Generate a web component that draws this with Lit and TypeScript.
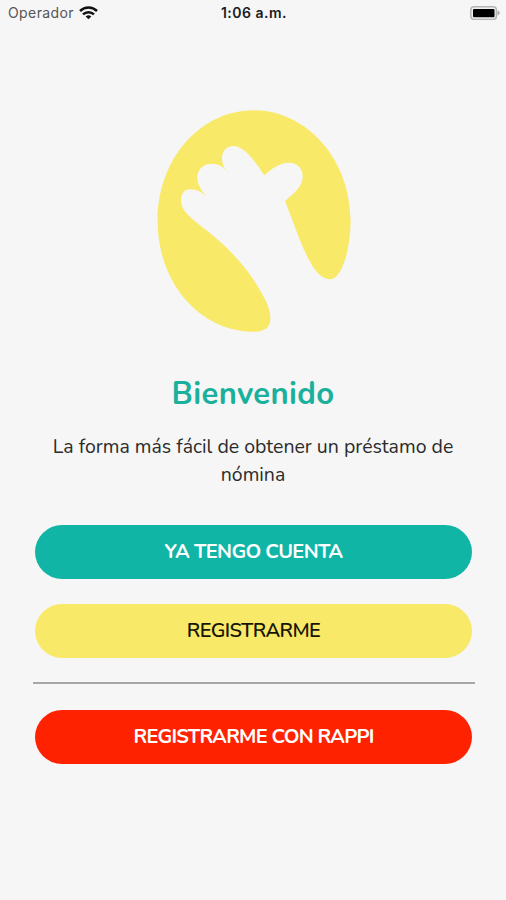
import { LitElement, html, css } from "lit";
import { customElement, property } from "lit/decorators.js";

@customElement("status-bar")
class StatusBar extends LitElement {
  static styles = css`
    :host {
      display: grid;
      grid-template-columns: 1fr auto 1fr;
      align-items: center;
      height: 26px;
      padding: 0 6px 0 8px;
      font: 14px/26px Inter, "Liberation Sans", sans-serif;
      color: #111;
    }
    .carrier { display: flex; align-items: center; gap: 5px; }
    .name { color: #555; letter-spacing: 0.4px; }
    .time { font-weight: 600; color: #1c1c1c; letter-spacing: 0.5px; }
    .battery { justify-self: end; }
    svg { display: block; }
  `;
  render() {
    return html`
      <div class="carrier">
        <span class="name">Operador</span>
        <svg width="19" height="14" viewBox="0 0 19 14" fill="none" stroke="#111" stroke-width="2.5">
          <path d="M1 5C5.8 0.4 13.2 0.4 18 5" />
          <path d="M4 8.4C7.1 5.4 11.9 5.4 15 8.4" />
          <path d="M6.7 10.4Q9.5 8.2 12.3 10.4L9.5 13.3Z" fill="#111" stroke="none" />
        </svg>
      </div>
      <span class="time">1:06 a.m.</span>
      <svg class="battery" width="30" height="14" viewBox="0 0 30 14">
        <rect x="0.8" y="0.8" width="25.6" height="12.6" rx="3.2" fill="#f0f0f0" stroke="#b5b5b5" stroke-width="1.5" />
        <rect x="3" y="3" width="21.5" height="8.3" rx="1" fill="#000" />
        <path d="M27.5 4.6Q29.8 5.5 29.8 7T27.5 9.4Z" fill="#aaa" />
      </svg>
    `;
  }
}

@customElement("pill-button")
class PillButton extends LitElement {
  @property({ reflect: true }) tone = "teal";
  static styles = css`
    :host { display: block; }
    button {
      display: block;
      width: 100%;
      height: 54px;
      padding: 0;
      border: 0;
      border-radius: 27px;
      font: 600 20px/53px "Nunito", "Noto Sans", sans-serif;
      letter-spacing: -0.6px;
      color: #fff;
      background: #10b5a5;
    }
    :host([tone="teal"]) button { font-weight: 700; letter-spacing: -0.65px; }
    :host([tone="red"]) button { font-weight: 700; letter-spacing: -0.8px; background: #ff2200; }
    :host([tone="yellow"]) button { color: #171506; background: #f8e968; }
    span { display: block; height: 54px; }
  `;
  render() {
    return html`<button><span><slot></slot></span></button>`;
  }
}

@customElement("app-root")
class AppRoot extends LitElement {
  static styles = css`
    :host {
      display: flex;
      flex-direction: column;
      height: 900px;
      background: #f6f6f6;
      font-family: "Nunito", "Noto Sans", sans-serif;
    }
    .logo { display: block; align-self: center; margin: 83px 0 0 2px; }
    h1 {
      margin: 37px 0 0;
      text-align: center;
      font-size: 31px;
      font-weight: 700;
      line-height: 48px;
      letter-spacing: 0.35px;
      color: #1ab09c;
    }
    p {
      margin: 15px 40px 0;
      text-align: center;
      font-size: 19.5px;
      line-height: 28px;
      color: #2b2b2b;
    }
    .actions { display: flex; flex-direction: column; margin: 36px 34px 0 35px; }
    .second { margin-top: 25px; }
    .third { margin-top: 26px; }
    .rule { height: 2px; margin: 24px -3px 0 -2px; background: #a6a6a6; }
  `;
  render() {
    return html`
      <status-bar></status-bar>
      <svg class="logo" width="194" height="224" viewBox="157 109 194 224">
        <path fill="#f8e968" d="M157.6 221C157.6 158 201 110.3 254 110.3S350.6 160 350.6 221C350.5 249 342 279.3 330 279.3C313 279.3 301 243 292.3 220L285 201C293 194 302.7 187 302.7 176.5C302.7 168 297 162.7 289 162.7C280 162.7 271 169 264.3 175.3C256 163 245 146 233 146C226.5 146 222 151.5 222 158C222 164 224.5 169 228.3 173.3C224 167.5 219.5 163.8 212 163.8C203 163.8 197.3 170 197.3 177C197.3 185 202 192 208 197.5C203 192.5 197 189.2 190 189.2C184 189.2 181 194 181 200C181 211 191 218 205 229.3C226 245 247 267 260.5 291C266 301 270.4 309 270.4 319C270.4 327 265 331.8 254 331.8C199 331.8 157.6 282 157.6 221Z" />
      </svg>
      <h1>Bienvenido</h1>
      <p>La forma más fácil de obtener un préstamo de nómina</p>
      <div class="actions">
        <pill-button tone="teal">YA TENGO CUENTA</pill-button>
        <pill-button class="second" tone="yellow">REGISTRARME</pill-button>
        <div class="rule"></div>
        <pill-button class="third" tone="red">REGISTRARME CON RAPPI</pill-button>
      </div>
    `;
  }
}
